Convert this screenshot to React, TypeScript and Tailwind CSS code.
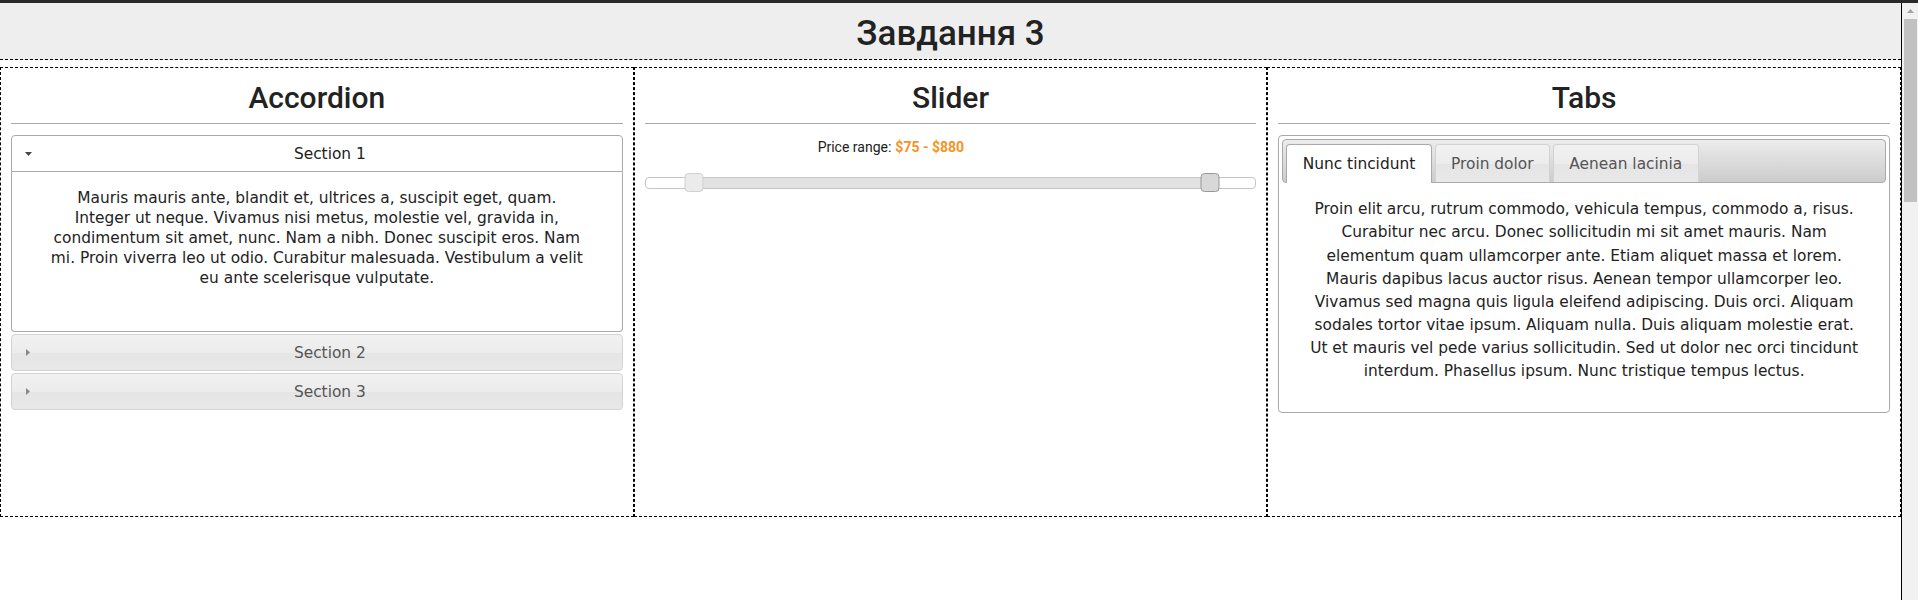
import { useState } from "react";

const ACCORDION_TEXT =
  "Mauris mauris ante, blandit et, ultrices a, suscipit eget, quam. Integer ut neque. Vivamus nisi metus, molestie vel, gravida in, condimentum sit amet, nunc. Nam a nibh. Donec suscipit eros. Nam mi. Proin viverra leo ut odio. Curabitur malesuada. Vestibulum a velit eu ante scelerisque vulputate.";

const TAB_TEXT =
  "Proin elit arcu, rutrum commodo, vehicula tempus, commodo a, risus. Curabitur nec arcu. Donec sollicitudin mi sit amet mauris. Nam elementum quam ullamcorper ante. Etiam aliquet massa et lorem. Mauris dapibus lacus auctor risus. Aenean tempor ullamcorper leo. Vivamus sed magna quis ligula eleifend adipiscing. Duis orci. Aliquam sodales tortor vitae ipsum. Aliquam nulla. Duis aliquam molestie erat. Ut et mauris vel pede varius sollicitudin. Sed ut dolor nec orci tincidunt interdum. Phasellus ipsum. Nunc tristique tempus lectus.";

// jQuery UI "glass" look for default-state headers and tabs
const glass =
  "bg-[linear-gradient(to_bottom,#f1f1f1_0%,#ececec_50%,#e5e5e5_51%,#e8e8e8_100%)]";

const Heading = ({ children }: { children: string }) => (
  <>
    <h2 className="mt-[13px] text-center font-['Roboto',sans-serif] text-[30px] font-medium leading-[33px] text-[#222]">
      {children}
    </h2>
    <div className="mt-[9px] h-px bg-[#aaaaaa]" />
  </>
);

const Accordion = () => {
  const [open, setOpen] = useState(0);
  const sections = ["Section 1", "Section 2", "Section 3"];

  return (
    <div className="mt-[11px] flex flex-col gap-[2px] font-['DejaVu_Sans',Verdana,sans-serif] text-[15.4px] leading-[20px]">
      {sections.map((title, i) => {
        const active = open === i;
        return (
          <div key={title}>
            <button
              onClick={() => setOpen(i)}
              className={
                active
                  ? "relative flex h-[37px] w-full items-center justify-center rounded-t-[4px] border border-[#aaaaaa] bg-white pl-[34px] pr-[8px] text-[#212121]"
                  : `relative flex h-[37px] w-full items-center justify-center rounded-[4px] border border-[#d3d3d3] ${glass} pl-[34px] pr-[8px] text-[#555555]`
              }
            >
              <span className="absolute left-[8px] top-1/2 flex h-4 w-4 -translate-y-1/2 items-center justify-center">
                {active ? (
                  <svg width="7" height="4" viewBox="0 0 7 4">
                    <polygon points="0,0 7,0 3.5,4" fill="#454545" />
                  </svg>
                ) : (
                  <svg width="4" height="7" viewBox="0 0 4 7">
                    <polygon points="0,0 4,3.5 0,7" fill="#888888" />
                  </svg>
                )}
              </span>
              {title}
            </button>
            {active && (
              <div className="h-[160px] rounded-b-[4px] border border-t-0 border-[#aaaaaa] bg-white px-[35.5px] pt-[16px] text-center text-[#222]">
                <p>{i === 0 ? ACCORDION_TEXT : ""}</p>
              </div>
            )}
          </div>
        );
      })}
    </div>
  );
};

const RangeSlider = () => {
  const max = 950;
  const values = [75, 880];
  const pct = values.map((v) => (v / max) * 100);

  return (
    <>
      <p className="mt-[13px] flex justify-center font-['Roboto',sans-serif] text-[14px] leading-[20px] text-[#222]">
        <label htmlFor="amount">Price range:</label>
        <input
          id="amount"
          readOnly
          value={`$${values[0]} - $${values[1]}`}
          className="ml-[2px] w-[190px] border-0 px-[2px] font-bold text-[#f6931f] outline-none"
        />
      </p>
      <div className="relative mt-[20px] h-[12px] rounded-[4px] border border-[#c5c5c5] bg-white">
        <div
          className="absolute inset-y-0 bg-[#e2e2e2]"
          style={{ left: `${pct[0]}%`, right: `${100 - pct[1]}%` }}
        />
        <span
          className="absolute top-[-5px] h-[19px] w-[19px] -translate-x-1/2 rounded-[4px] border border-[#d0d0d0] bg-[#ebebeb]"
          style={{ left: `${pct[0]}%` }}
        />
        <span
          className="absolute top-[-5px] h-[19px] w-[19px] -translate-x-1/2 rounded-[4px] border border-[#999999] bg-[#d8d8d8]"
          style={{ left: `${pct[1]}%` }}
        />
      </div>
    </>
  );
};

const Tabs = () => {
  const [tab, setTab] = useState(0);
  const tabs = ["Nunc tincidunt", "Proin dolor", "Aenean lacinia"];

  return (
    <div className="mt-[11px] rounded-[4px] border border-[#aaaaaa] p-[3px] font-['DejaVu_Sans',Verdana,sans-serif] text-[15.4px]">
      <div className="flex items-start gap-[3px] rounded-[4px] border border-[#aaaaaa] bg-[linear-gradient(to_bottom,#ececec,#cccccc)] px-[3px] pt-[4px]">
        {tabs.map((t, i) =>
          tab === i ? (
            <button
              key={t}
              onClick={() => setTab(i)}
              className="-mb-px h-[39px] rounded-t-[4px] border border-b-0 border-[#aaaaaa] bg-white px-[15.4px] leading-[20px] text-[#212121]"
            >
              {t}
            </button>
          ) : (
            <button
              key={t}
              onClick={() => setTab(i)}
              className={`h-[38px] rounded-t-[4px] border border-b-0 border-[#d3d3d3] ${glass} px-[15.4px] leading-[20px] text-[#555555]`}
            >
              {t}
            </button>
          )
        )}
      </div>
      <div className="px-[21.6px] pb-[15.4px] pt-[15.4px] text-center leading-[23.1px] text-[#222]">
        <p className="mb-[10px]">{TAB_TEXT}</p>
      </div>
    </div>
  );
};

const Scrollbar = () => (
  <div className="flex w-[16px] flex-col items-center bg-[#f1f1f1]">
    <svg className="mt-[6px]" width="7" height="4" viewBox="0 0 7 4">
      <polygon points="3.5,0 7,4 0,4" fill="#a3a3a3" />
    </svg>
    <div className="ml-[1px] mt-[6px] h-[183px] w-[13px] bg-[#c1c1c1]" />
  </div>
);

export default function App() {
  return (
    <div className="flex h-[600px] flex-col overflow-hidden bg-white">
      <div className="h-[3px] bg-[#2a2a2a]" />
      <div className="flex flex-1">
        <div className="w-[1901px]">
          <div className="h-[57px] border-b border-dashed border-black bg-[#eeeeee] pt-[11px] text-center font-['Roboto',sans-serif] text-[35px] font-medium leading-[40px] text-[#222]">
            Завдання 3
          </div>
          <div className="mt-[7px] grid grid-cols-3">
            <div className="h-[450px] border border-dashed border-black px-[10px]">
              <Heading>Accordion</Heading>
              <Accordion />
            </div>
            <div className="h-[450px] border border-dashed border-black px-[10px]">
              <Heading>Slider</Heading>
              <RangeSlider />
            </div>
            <div className="h-[450px] border border-dashed border-black px-[10px]">
              <Heading>Tabs</Heading>
              <Tabs />
            </div>
          </div>
        </div>
        <div className="w-px bg-black" />
        <Scrollbar />
      </div>
    </div>
  );
}
